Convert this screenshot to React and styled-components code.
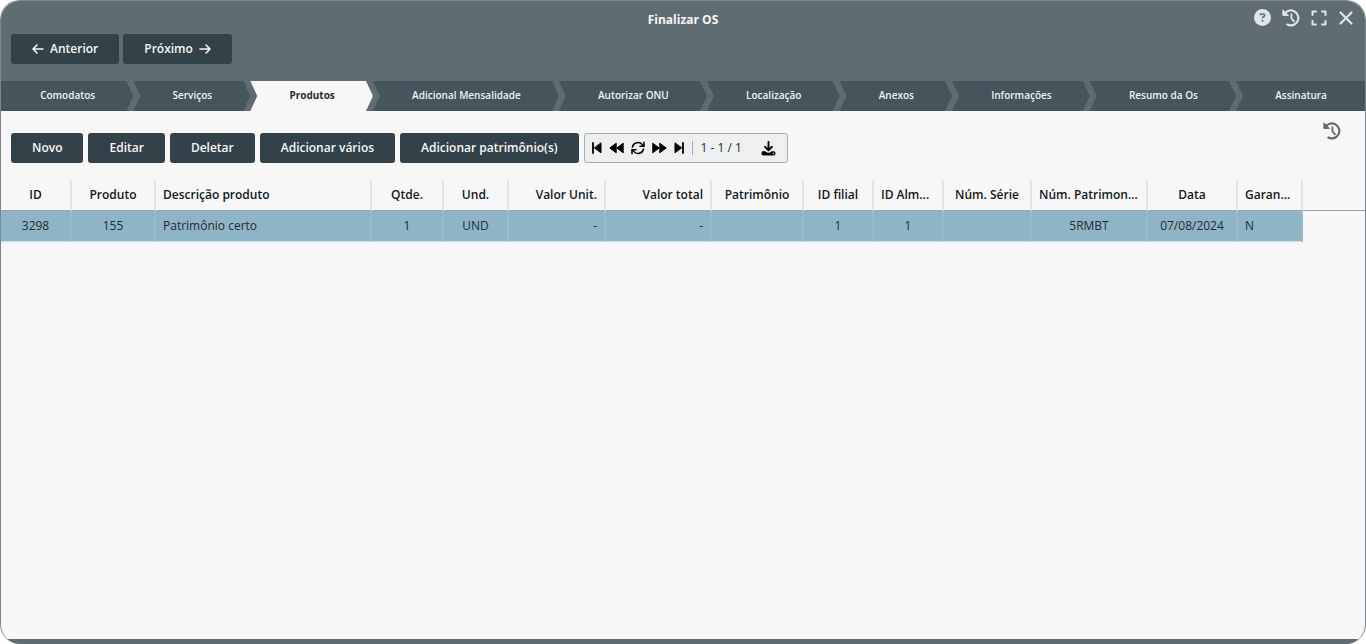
import React from "react";
import styled, { createGlobalStyle } from "styled-components";
import { FaCircleQuestion } from "react-icons/fa6";

const GlobalStyle = createGlobalStyle`
  * { box-sizing: border-box; }
  body { margin: 0; background: #fff; }
  button { font: inherit; cursor: pointer; }
`;

const Window = styled.main`
  display: flex;
  flex-direction: column;
  min-height: 100vh;
  overflow: hidden;
  border: 1px solid #7b878c;
  border-bottom: 0;
  border-radius: 20px;
  background: #f7f7f7;
  font-family: "Open Sans", "Noto Sans", sans-serif;
  font-size: 12px;
  line-height: 18px;
  color: #1f2d33;
`;

const Header = styled.header`
  background: #5f6c72;
`;

const Footer = styled.footer`
  height: 5px;
  margin-top: auto;
  background: #5f6c72;
`;

const TitleBar = styled.div`
  display: grid;
  grid-template-columns: 1fr auto 1fr;
  align-items: center;
  height: 33px;
  padding: 0 11px;
`;

const Title = styled.h1`
  grid-column: 2;
  margin: 4px 0 0;
  font-size: 12px;
  font-weight: 700;
  line-height: 18px;
  color: #f7f7f7;
`;

const WindowActions = styled.div`
  display: flex;
  justify-content: flex-end;
  align-items: center;
  gap: 11px;
`;

const IconButton = styled.button`
  display: inline-flex;
  align-items: center;
  justify-content: center;
  padding: 0;
  border: 0;
  background: none;
  color: ${(p) => p.$color || "#000"};
`;

const StepNav = styled.div`
  display: flex;
  gap: 4px;
  padding: 0 10px 17px;
`;

const Button = styled.button`
  display: inline-flex;
  align-items: center;
  justify-content: center;
  gap: 6px;
  height: 30px;
  padding: 0 21px;
  border: 0;
  border-radius: 3px;
  background: #324248;
  color: #f7f7f7;
  font-weight: 600;
  white-space: nowrap;
`;

const Steps = styled.nav`
  display: flex;
`;

const Step = styled.button`
  flex: 1 1 auto;
  height: 30px;
  padding: 0 6px 2px 7px;
  border: 0;
  background: ${(p) => (p.$active ? "#f7f7f7" : "#46545b")};
  color: ${(p) => (p.$active ? "#1f2d33" : "#f0f2f2")};
  font-size: 10px;
  font-weight: ${(p) => (p.$active ? 700 : 600)};
  white-space: nowrap;
  clip-path: polygon(0 0, calc(100% - 7px) 0, 100% 50%, calc(100% - 7px) 100%, 0 100%, 7px 50%);
  &:first-child {
    clip-path: polygon(0 0, calc(100% - 7px) 0, 100% 50%, calc(100% - 7px) 100%, 0 100%);
  }
  &:last-child {
    clip-path: polygon(0 0, 100% 0, 100% 100%, 0 100%, 7px 50%);
  }
`;

const Toolbar = styled.div`
  display: flex;
  gap: 5px;
  padding: 22px 24px 17px 10px;
`;

const Pager = styled.div`
  display: flex;
  align-items: center;
  height: 30px;
  padding: 0 11px 0 7px;
  border: 1px solid #a3adb2;
  border-radius: 3px;
  background: #eef0f0;
`;

const PagerIcons = styled.div`
  display: flex;
  gap: 7px;
  padding-right: 8px;
`;

const PageCount = styled.span`
  padding: 0 19px 0 8px;
  border-left: 1px solid #a3adb2;
  line-height: 14px;
  white-space: nowrap;
`;

const HistoryButton = styled(IconButton)`
  align-self: flex-start;
  height: 20px;
  margin: -12px 0 0 auto;
`;

const TableArea = styled.div`
  overflow: hidden;
`;

const HeadRule = styled.div`
  height: 31px;
  margin-bottom: -31px;
  border-bottom: 1px solid #98a3a8;
`;

const Table = styled.table`
  width: 1302px;
  table-layout: fixed;
  border-collapse: separate;
  border-spacing: 0;
`;

const cell = `
  height: 31px;
  padding: 0 7px;
  overflow: hidden;
  text-overflow: ellipsis;
  white-space: nowrap;
`;

const Th = styled.th`
  ${cell}
  border-right: 2px solid #e4e6e6;
  border-bottom: 1px solid #98a3a8;
  font-weight: 600;
  color: #10191d;
  text-align: ${(p) => p.$align};
`;

const Td = styled.td`
  ${cell}
  border-right: 2px solid #9bbac8;
  border-bottom: 1px solid #d3dfe4;
  background: #8eb4c6;
  text-align: ${(p) => p.$align};
`;

const steps = [
  "Comodatos", "Serviços", "Produtos", "Adicional Mensalidade", "Autorizar ONU",
  "Localização", "Anexos", "Informações", "Resumo da Os", "Assinatura",
];

const columns = [
  { label: "ID", value: "3298", width: 71, align: "center" },
  { label: "Produto", value: "155", width: 84, align: "center" },
  { label: "Descrição produto", value: "Patrimônio certo", width: 216, align: "left" },
  { label: "Qtde.", value: "1", width: 72, align: "center" },
  { label: "Und.", value: "UND", width: 65, align: "center" },
  { label: "Valor Unit.", value: "-", width: 97, align: "right" },
  { label: "Valor total", value: "-", width: 106, align: "right" },
  { label: "Patrimônio", value: "", width: 92, align: "center" },
  { label: "ID filial", value: "1", width: 70, align: "center" },
  { label: "ID Alm...", value: "1", width: 70, align: "center", headAlign: "left" },
  { label: "Núm. Série", value: "", width: 88, align: "center" },
  { label: "Núm. Patrimon...", value: "5RMBT", width: 116, align: "center", headAlign: "left" },
  { label: "Data", value: "07/08/2024", width: 90, align: "center" },
  { label: "Garan...", value: "N", width: 65, align: "left" },
];

const Arrow = ({ flip }) => (
  <svg width="12" height="12" viewBox="0 0 12 12" fill="none" stroke="currentColor" strokeWidth="1.6" strokeLinecap="round" strokeLinejoin="round">
    <path d={flip ? "M1 6H11M7 2L11 6L7 10" : "M11 6H1M5 2L1 6L5 10"} />
  </svg>
);

const History = () => (
  <svg width="18" height="18" viewBox="0 0 18 18" fill="none" stroke="currentColor" strokeWidth="2.2" strokeLinecap="round" strokeLinejoin="round">
    <path d="M3 4.2A7.5 7.5 0 1 1 5.4 15.6" />
    <path d="M9.4 5.2V9.2L12 12.4" strokeWidth="1.8" />
    <path d="M0.9 1.2V6.4H6.1Z" fill="currentColor" strokeWidth="1" />
  </svg>
);

const Expand = () => (
  <svg width="16" height="16" viewBox="0 0 16 16" fill="none" stroke="currentColor" strokeWidth="2" strokeLinecap="round" strokeLinejoin="round">
    <path d="M1.5 5V1.5H5M11 1.5H14.5V5M14.5 11V14.5H11M5 14.5H1.5V11" />
  </svg>
);

const Close = () => (
  <svg width="16" height="16" viewBox="0 0 16 16" fill="none" stroke="currentColor" strokeWidth="2.2" strokeLinecap="round">
    <path d="M2.5 2.5L13.5 13.5M13.5 2.5L2.5 13.5" />
  </svg>
);

const Skip = ({ end }) => (
  <svg width="10" height="12" viewBox="0 0 10 12" fill="currentColor" stroke="currentColor" strokeLinejoin="round" strokeLinecap="round">
    <path d={end ? "M1 1.2V10.8L7.4 6Z" : "M9 1.2V10.8L2.6 6Z"} strokeWidth="1" />
    <path d={end ? "M9 1V11" : "M1 1V11"} strokeWidth="1.8" />
  </svg>
);

const Double = ({ forward }) => (
  <svg width="15" height="12" viewBox="0 0 15 12" fill="currentColor" stroke="currentColor" strokeWidth="1" strokeLinejoin="round">
    <path d={forward ? "M0.8 1.2V10.8L7.2 6ZM7.8 1.2V10.8L14.2 6Z" : "M7.2 1.2V10.8L0.8 6ZM14.2 1.2V10.8L7.8 6Z"} />
  </svg>
);

const Refresh = () => (
  <svg width="14" height="14" viewBox="0 0 14 14" fill="none" stroke="currentColor" strokeWidth="1.5" strokeLinecap="round" strokeLinejoin="round">
    <path d="M1.4 6A5.7 5.7 0 0 1 11.4 3.6L12.8 5M12.6 8A5.7 5.7 0 0 1 2.6 10.4L1.2 9" />
    <path d="M13 1.2V5.2H9M1 12.8V8.8H5" />
  </svg>
);

const Download = () => (
  <svg width="15" height="15" viewBox="0 0 15 15" fill="none" stroke="currentColor" strokeLinecap="round" strokeLinejoin="round">
    <path d="M7.5 1V9M4 5.8L7.5 9.2L11 5.8" strokeWidth="1.9" />
    <path d="M2 10.8H4.6L6 12.1H9L10.4 10.8H13Q14 10.8 14 11.8V13Q14 14 13 14H2Q1 14 1 13V11.8Q1 10.8 2 10.8Z" fill="currentColor" strokeWidth="0.9" />
    <circle cx="12.4" cy="12.5" r="0.7" fill="#eef0f0" stroke="none" />
  </svg>
);

export default function App() {
  return (
    <>
      <GlobalStyle />
      <Window>
        <Header>
          <TitleBar>
            <Title>Finalizar OS</Title>
            <WindowActions>
              <IconButton $color="#e0e4e5" aria-label="Ajuda"><FaCircleQuestion size={17} /></IconButton>
              <IconButton $color="#e0e4e5" aria-label="Histórico"><History /></IconButton>
              <IconButton $color="#e0e4e5" aria-label="Maximizar"><Expand /></IconButton>
              <IconButton $color="#e0e4e5" aria-label="Fechar"><Close /></IconButton>
            </WindowActions>
          </TitleBar>
          <StepNav>
            <Button><Arrow />Anterior</Button>
            <Button>Próximo<Arrow flip /></Button>
          </StepNav>
          <Steps>
            {steps.map((s) => (
              <Step key={s} $active={s === "Produtos"}>{s}</Step>
            ))}
          </Steps>
        </Header>
        <Toolbar>
          <Button>Novo</Button>
          <Button>Editar</Button>
          <Button>Deletar</Button>
          <Button>Adicionar vários</Button>
          <Button>Adicionar patrimônio(s)</Button>
          <Pager>
            <PagerIcons>
              <IconButton aria-label="Primeira página"><Skip /></IconButton>
              <IconButton aria-label="Página anterior"><Double /></IconButton>
              <IconButton aria-label="Atualizar"><Refresh /></IconButton>
              <IconButton aria-label="Próxima página"><Double forward /></IconButton>
              <IconButton aria-label="Última página"><Skip end /></IconButton>
            </PagerIcons>
            <PageCount>1 - 1 / 1</PageCount>
            <IconButton aria-label="Baixar"><Download /></IconButton>
          </Pager>
          <HistoryButton $color="#666" aria-label="Histórico de registros"><History /></HistoryButton>
        </Toolbar>
        <TableArea>
          <HeadRule />
          <Table>
            <colgroup>
              {columns.map((c) => <col key={c.label} width={c.width} />)}
            </colgroup>
            <thead>
              <tr>{columns.map((c) => <Th key={c.label} $align={c.headAlign || c.align}>{c.label}</Th>)}</tr>
            </thead>
            <tbody>
              <tr>{columns.map((c) => <Td key={c.label} $align={c.align}>{c.value}</Td>)}</tr>
            </tbody>
          </Table>
        </TableArea>
        <Footer />
      </Window>
    </>
  );
}
